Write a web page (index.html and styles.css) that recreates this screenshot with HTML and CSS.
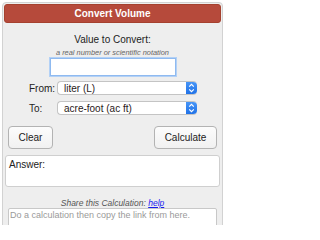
FILE: index.html
```html
<!DOCTYPE html>
<html>
<head>
<meta charset="utf-8">
<link rel="stylesheet" href="styles.css">
</head>
<body>
<div class="page">
<div class="panel">
  <div class="header">Convert Volume</div>
  <div class="value-label">Value to Convert:</div>
  <div class="hint">a real number or scientific notation</div>
  <div class="input-wrap"><div class="value-input"></div></div>
  <div class="row row-from">
    <span class="row-label">From:</span>
    <div class="select">
      <span class="select-text">liter (L)</span>
      <span class="select-arrow"><svg width="7" height="10" viewBox="0 0 7 10"><path d="M1.2 3.6 L3.5 1.4 L5.8 3.6 M1.2 6.4 L3.5 8.6 L5.8 6.4" fill="none" stroke="#fff" stroke-width="1.2"/></svg></span>
    </div>
  </div>
  <div class="row row-to">
    <span class="row-label">To:</span>
    <div class="select">
      <span class="select-text">acre-foot (ac ft)</span>
      <span class="select-arrow"><svg width="7" height="10" viewBox="0 0 7 10"><path d="M1.2 3.6 L3.5 1.4 L5.8 3.6 M1.2 6.4 L3.5 8.6 L5.8 6.4" fill="none" stroke="#fff" stroke-width="1.2"/></svg></span>
    </div>
  </div>
  <div class="buttons">
    <div class="btn btn-clear">Clear</div>
    <div class="btn btn-calc">Calculate</div>
  </div>
  <div class="answer">Answer:</div>
  <div class="share">Share this Calculation: <a class="help" href="#">help</a></div>
  <div class="link-box">Do a calculation then copy the link from here.</div>
</div>
</div>
</body>
</html>
```

FILE: styles.css
```css
html, body {
  margin: 0;
  padding: 0;
  background: #ffffff;
}
body {
  font-family: "Liberation Sans", Arial, sans-serif;
  color: #222;
}
.page {
  width: 225px;
  height: 225px;
  overflow: hidden;
  background: #ffffff;
}
.panel {
  margin: 2px 2px 0 2px;
  border: 1px solid #d2d2d2;
  border-radius: 4px;
  background: #eeeeee;
  padding: 1px 1px 20px 1px;
  display: flex;
  flex-direction: column;
}
.header {
  height: 17px;
  line-height: 17px;
  border: 0.5px solid #a5412f;
  background: #b64a3b;
  border-radius: 3px;
  color: #ffffff;
  font-weight: bold;
  font-size: 10px;
  text-align: center;
}
.value-label {
  margin-top: 11px;
  font-size: 10px;
  line-height: 12px;
  text-align: center;
  color: #222;
}
.hint {
  margin-top: 3px;
  font-size: 7.4px;
  line-height: 8px;
  font-style: italic;
  text-align: center;
  color: #666;
}
.input-wrap {
  display: flex;
  justify-content: center;
}
.value-input {
  width: 124px;
  height: 16px;
  background: #fff;
  border: 1px solid #8fbaf0;
  box-shadow: 0 0 0 1px #b3d1f6;
  margin-top: 1px;
}
.row {
  display: flex;
  align-items: center;
  padding-left: 25px;
  font-size: 10px;
}
.row-from { margin-top: 5px; }
.row-to { margin-top: 6px; }
.row-label {
  width: 28px;
  color: #222;
}
.select {
  width: 140px;
  height: 14px;
  box-sizing: border-box;
  display: flex;
  align-items: center;
  justify-content: space-between;
  background: #fff;
  border: 1px solid #c4c4c4;
  border-right: none;
  border-radius: 4px;
  overflow: hidden;
}
.select-text {
  padding-left: 6px;
  font-size: 10px;
  color: #2a1a1a;
}
.select-arrow {
  width: 11px;
  height: 14px;
  display: flex;
  align-items: center;
  justify-content: center;
  background: linear-gradient(#4a98f8, #1d6fe6);
  border-radius: 0 4px 4px 0;
  margin-top: -1px;
  margin-bottom: -1px;
}
.buttons {
  margin-top: 11px;
  display: flex;
  justify-content: space-between;
  padding: 0 4px;
}
.btn {
  height: 21px;
  line-height: 21px;
  border: 1px solid #b3b3b3;
  border-radius: 4px;
  background: linear-gradient(#fcfcfc, #f1f1f1);
  font-size: 10px;
  text-align: center;
  color: #222;
}
.btn-clear { width: 43px; }
.btn-calc { width: 61px; }
.answer {
  margin: 6px 1px 0 1px;
  height: 27px;
  padding: 3px 3px 0 3px;
  background: #fff;
  border: 1px solid #cfcfcf;
  border-radius: 3px;
  font-size: 10px;
  line-height: 12px;
  color: #222;
}
.share {
  margin-top: 11px;
  font-size: 8.5px;
  line-height: 10px;
  font-style: italic;
  text-align: center;
  color: #555;
}
.help {
  color: #1a1aee;
  text-decoration: underline;
}
.link-box {
  margin: 0 4px 0 4px;
  height: 24px;
  padding: 1px 1px 0 1px;
  background: #fff;
  border: 1px solid #c8c8c8;
  border-radius: 2px;
  font-size: 9px;
  line-height: 11px;
  color: #9a9a9a;
}
```
